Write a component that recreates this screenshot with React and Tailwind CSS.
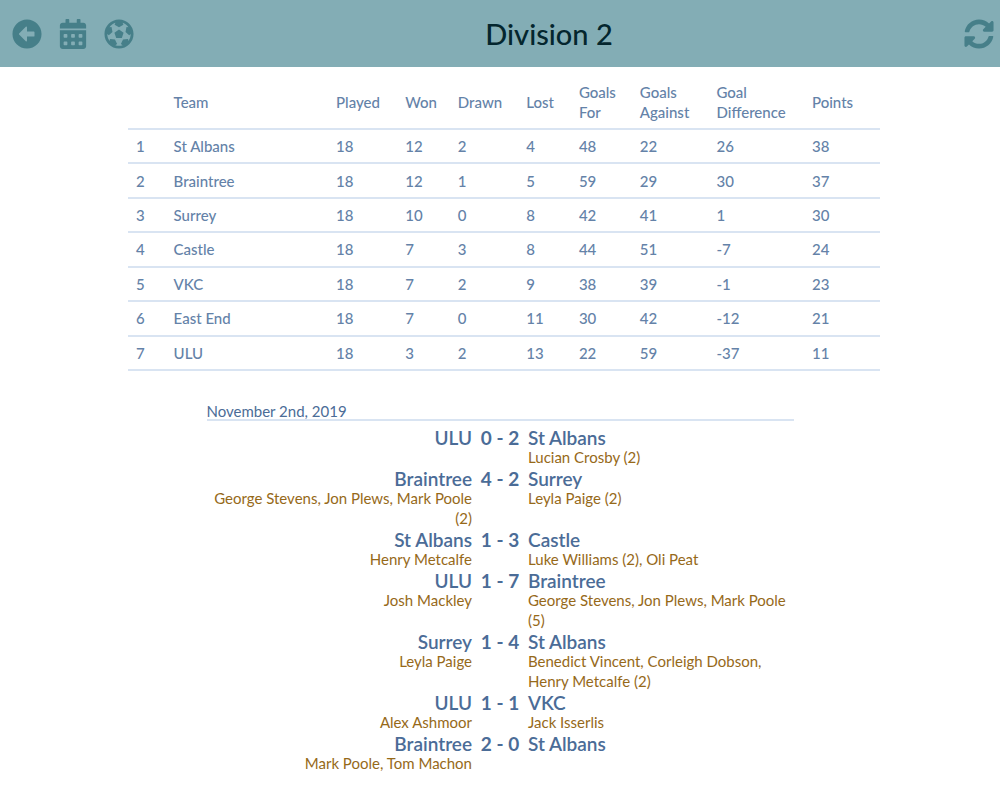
import React from "react";
import { FaArrowAltCircleLeft, FaCalendarAlt, FaFutbol, FaSyncAlt } from "react-icons/fa";

const columns = [
  ["", "w-[5%]"],
  ["Team", "w-[21.6%]"],
  ["Played", "w-[9.2%]"],
  ["Won", "w-[7%]"],
  ["Drawn", "w-[9.1%]"],
  ["Lost", "w-[7%]"],
  ["Goals For", "w-[8.1%]"],
  ["Goals Against", "w-[10.2%]"],
  ["Goal Difference", "w-[12.7%]"],
  ["Points", "w-[10.1%]"],
];

const standings = [
  ["1", "St Albans", "18", "12", "2", "4", "48", "22", "26", "38"],
  ["2", "Braintree", "18", "12", "1", "5", "59", "29", "30", "37"],
  ["3", "Surrey", "18", "10", "0", "8", "42", "41", "1", "30"],
  ["4", "Castle", "18", "7", "3", "8", "44", "51", "-7", "24"],
  ["5", "VKC", "18", "7", "2", "9", "38", "39", "-1", "23"],
  ["6", "East End", "18", "7", "0", "11", "30", "42", "-12", "21"],
  ["7", "ULU", "18", "3", "2", "13", "22", "59", "-37", "11"],
];

const results = [
  ["ULU", "", "0 - 2", "St Albans", "Lucian Crosby (2)"],
  ["Braintree", "George Stevens, Jon Plews, Mark Poole (2)", "4 - 2", "Surrey", "Leyla Paige (2)"],
  ["St Albans", "Henry Metcalfe", "1 - 3", "Castle", "Luke Williams (2), Oli Peat"],
  ["ULU", "Josh Mackley", "1 - 7", "Braintree", "George Stevens, Jon Plews, Mark Poole (5)"],
  ["Surrey", "Leyla Paige", "1 - 4", "St Albans", "Benedict Vincent, Corleigh Dobson, Henry Metcalfe (2)"],
  ["ULU", "Alex Ashmoor", "1 - 1", "VKC", "Jack Isserlis"],
  ["Braintree", "Mark Poole, Tom Machon", "2 - 0", "St Albans", ""],
];

function IconButton({ label, icon: Icon }) {
  return (
    <button type="button" aria-label={label} className="flex w-[30px] justify-center text-[#467f89]">
      <Icon className="size-[30px]" />
    </button>
  );
}

function Side({ team, scorers }) {
  return (
    <div>
      <h3 className="text-[19px] leading-[18px] font-semibold">{team}</h3>
      {scorers && <p className="text-[15px] leading-5 text-[#966919]">{scorers}</p>}
    </div>
  );
}

export default function App() {
  return (
    <div className="min-h-screen bg-white font-['Trebuchet_MS','Lato',sans-serif] text-[#4b6c97]">
      <header className="flex h-[67px] items-center bg-[#83adb5] pr-[6px] pl-3">
        <nav className="flex gap-4">
          <IconButton label="Back" icon={FaArrowAltCircleLeft} />
          <IconButton label="Fixtures" icon={FaCalendarAlt} />
          <IconButton label="Teams" icon={FaFutbol} />
        </nav>
        <h1 className="flex-1 text-center text-[29px] leading-9 font-medium text-[#04262e]">Division 2</h1>
        <IconButton label="Refresh" icon={FaSyncAlt} />
      </header>

      <main>
        <div className="pt-2 pl-2">
          <table className="mx-auto h-[296px] w-[calc(75%+8px)] table-fixed border-collapse text-left text-[15px] leading-5 font-medium text-[#6482a8]">
            <thead>
              <tr className="h-[54px] border-b-2 border-[#d9e4f2]">
                {columns.map(([name, width]) => (
                  <th key={name} scope="col" className={`${width} px-2 font-medium`}>{name}</th>
                ))}
              </tr>
            </thead>
            <tbody>
              {standings.map((row) => (
                <tr key={row[1]} className="border-b-2 border-[#d9e4f2]">
                  {row.map((cell, i) => (
                    <td key={i} className="px-2">{cell}</td>
                  ))}
                </tr>
              ))}
            </tbody>
          </table>
        </div>

        <section className="mx-auto mt-8 w-[calc(75%-163px)]">
          <h2 className="mb-2 border-b-2 border-[#d9e4f2] text-[15px] leading-4">November 2nd, 2019</h2>
          <div className="flex flex-col gap-[3px]">
            {results.map(([home, homeScorers, score, away, awayScorers], i) => (
              <article key={i} className="grid grid-cols-[1fr_56px_1fr]">
                <div className="text-right">
                  <Side team={home} scorers={homeScorers} />
                </div>
                <p className="text-center text-[19px] leading-[18px] font-bold">{score}</p>
                <Side team={away} scorers={awayScorers} />
              </article>
            ))}
          </div>
        </section>
      </main>
    </div>
  );
}
